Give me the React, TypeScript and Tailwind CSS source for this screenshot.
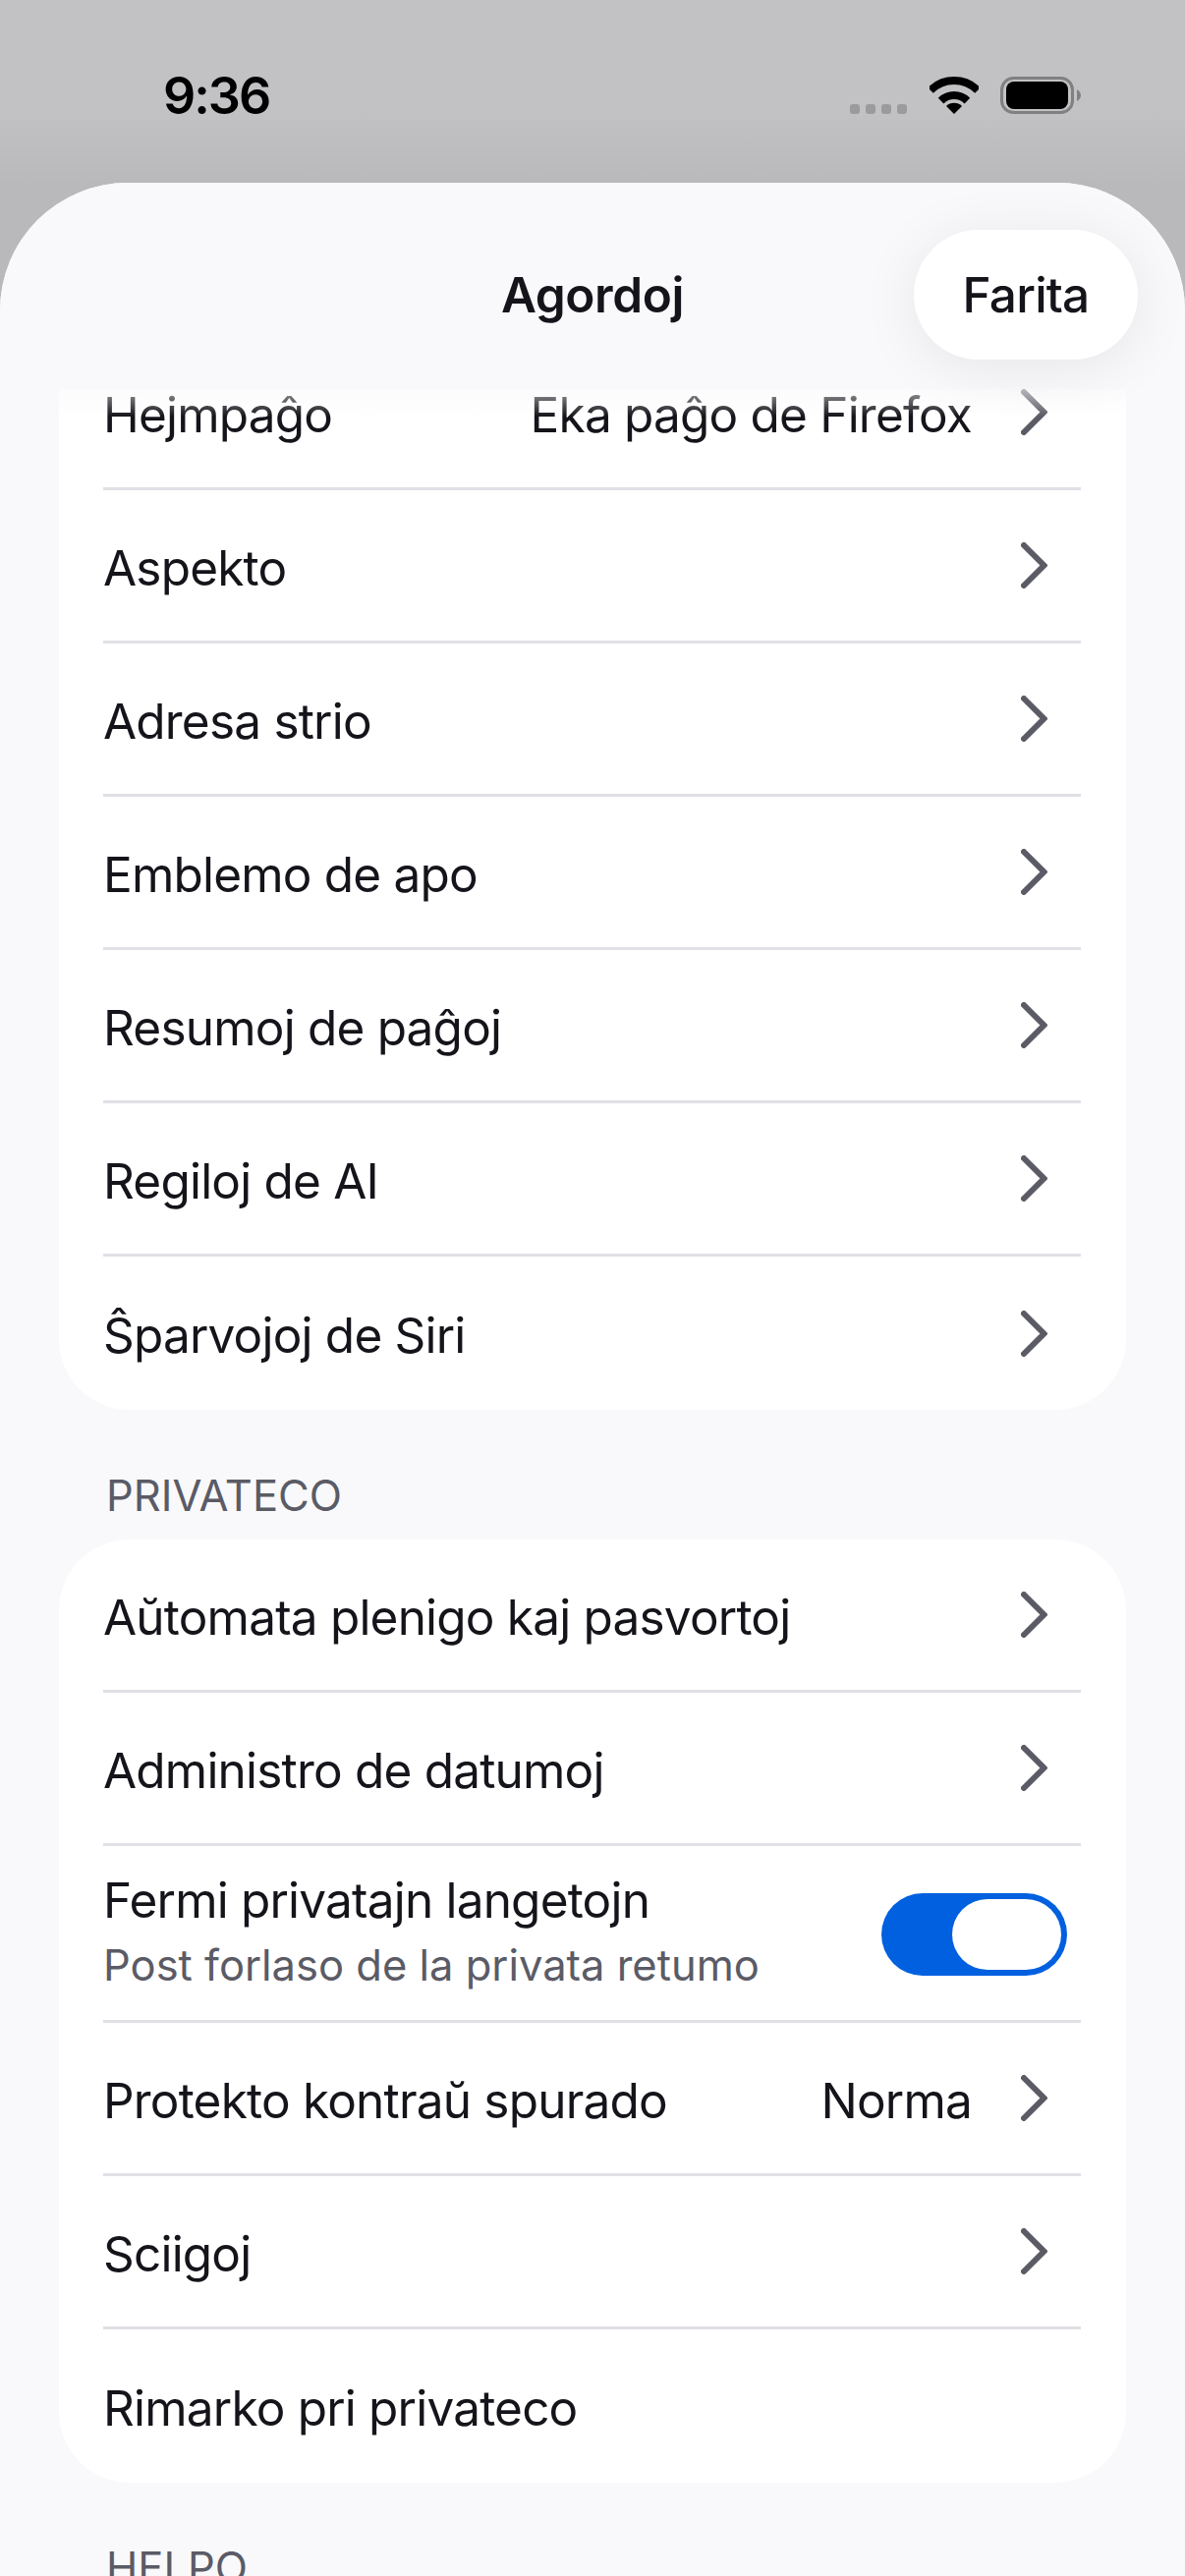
const font = { fontFamily: '"Inter", "Liberation Sans", sans-serif' };

function Chevron({ hasValue }: { hasValue?: boolean }) {
  return (
    <svg
      width="27"
      height="47"
      viewBox="0 0 27 47"
      className={`shrink-0 mr-[34px] ${hasValue ? "ml-[50px]" : "ml-0"}`}
      fill="none"
    >
      <path d="M3 3 L23.5 23.5 L3 44" stroke="#5b5b66" strokeWidth="6" strokeLinecap="round" strokeLinejoin="miter" />
    </svg>
  );
}

type RowProps = {
  label: string;
  sub?: string;
  value?: string;
  chevron?: boolean;
  last?: boolean;
  h: string;
  toggle?: boolean;
};

function Row({ label, sub, value, chevron = true, last, h, toggle }: RowProps) {
  return (
    <div className={`ml-[45px] mr-[46px] flex items-center ${h} ${last ? "" : "border-b-[3px] border-[#e0e0e6]"}`}>
      <div className={`flex-1 min-w-0 ${sub ? "pb-[5px]" : "pt-[4px]"}`}>
        <div className="text-[49.5px] leading-[60px] tracking-[-0.8px] text-[#15141a] whitespace-nowrap">{label}</div>
        {sub && <div className="mt-[10px] text-[43.5px] leading-[52px] text-[#5b5b66] whitespace-nowrap">{sub}</div>}
      </div>
      {value && (
        <div className="pt-[4px] text-[49.5px] leading-[60px] tracking-[-0.8px] text-[#15141a] whitespace-nowrap">{value}</div>
      )}
      {toggle && (
        <div className="mr-[14px] mt-[3px] w-[189px] h-[84px] rounded-full bg-[#0060df] flex items-center justify-end pr-[6px]">
          <div className="w-[111px] h-[72px] rounded-full bg-white" />
        </div>
      )}
      {chevron && <Chevron hasValue={!!value} />}
    </div>
  );
}

export default function App() {
  return (
    <div style={font} className="w-[1206px] h-[2622px] overflow-hidden flex flex-col bg-[#b9b9bb]">
      <div className="h-[186px] shrink-0 flex items-start pt-[62px] pl-[166px] pr-[106px] bg-gradient-to-b from-[#c2c2c4] from-[60%] to-[#b9b9bb]">
        <div className="pt-[1px] text-[52px] leading-[70px] tracking-[-2px] font-semibold text-black flex-1">9:36</div>
        <div className="flex items-start pt-[16px]">
          <div className="flex gap-[6px] mt-[28px] mr-[23px]">
            <div className="w-[10px] h-[10px] rounded-[3px] bg-[#9b9b9d]" />
            <div className="w-[10px] h-[10px] rounded-[3px] bg-[#9b9b9d]" />
            <div className="w-[10px] h-[10px] rounded-[3px] bg-[#9b9b9d]" />
            <div className="w-[10px] h-[10px] rounded-[3px] bg-[#9b9b9d]" />
          </div>
          <svg width="50" height="38" viewBox="0 0 50 38" fill="none" className="mr-[22px]">
            <path d="M1 14 A34 34 0 0 1 49 14" stroke="#000" strokeWidth="8" />
            <path d="M11.6 24.6 A19 19 0 0 1 38.4 24.6" stroke="#000" strokeWidth="8" />
            <path d="M25 38 L17 30 A11.3 11.3 0 0 1 33 30 Z" fill="#000" />
          </svg>
          <svg width="82" height="38" viewBox="0 0 82 38" fill="none">
            <rect x="1.5" y="1.5" width="72" height="35" rx="12" stroke="#808082" strokeWidth="3" />
            <rect x="6" y="5" width="63" height="28" rx="8" fill="#000" />
            <path d="M78 13 C80.5 14.5 82 16.5 82 19 C82 21.5 80.5 23.5 78 25 Z" fill="#808082" />
          </svg>
        </div>
      </div>

      <div className="flex-1 min-h-0 flex flex-col bg-[#f9f9fb] rounded-t-[130px] overflow-hidden">
        <div className="relative z-10 shrink-0 h-[210px] bg-[#f9f9fb] grid grid-cols-[1fr_auto_1fr] items-start pt-[48px]">
          <div />
          <div className="h-[132px] flex items-center text-[49.5px] tracking-[-0.4px] font-semibold text-[#15141a]">Agordoj</div>
          <div className="justify-self-end mr-[48px] w-[228px] h-[132px] rounded-[66px] bg-white flex items-center justify-center text-[49.5px] tracking-[-0.8px] font-medium text-[#15141a] shadow-[0_8px_60px_rgba(0,0,0,0.08)]">
            Farita
          </div>
        </div>

        <div className="relative flex-1 min-h-0 overflow-hidden">
          <div className="absolute inset-x-0 top-0 h-[28px] z-[1] bg-gradient-to-b from-[#f9f9fb]/60 to-transparent" />
          <div className="mx-[60px] -mt-[53px] bg-white rounded-b-[72px]">
            <Row label="Hejmpaĝo" value="Eka paĝo de Firefox" h="h-[156px]" />
            <Row label="Aspekto" h="h-[156px]" />
            <Row label="Adresa strio" h="h-[156px]" />
            <Row label="Emblemo de apo" h="h-[156px]" />
            <Row label="Resumoj de paĝoj" h="h-[156px]" />
            <Row label="Regiloj de AI" h="h-[156px]" />
            <Row label="Ŝparvojoj de Siri" h="h-[156px]" last />
          </div>

          <div className="ml-[108px] mt-[61px] text-[43.5px] leading-[52px] text-[#5b5b66]">PRIVATECO</div>
          <div className="mx-[60px] mt-[19px] bg-white rounded-[72px]">
            <Row label="Aŭtomata plenigo kaj pasvortoj" h="h-[156px]" />
            <Row label="Administro de datumoj" h="h-[156px]" />
            <Row label="Fermi privatajn langetojn" sub="Post forlaso de la privata retumo" chevron={false} toggle h="h-[180px]" />
            <Row label="Protekto kontraŭ spurado" value="Norma" h="h-[156px]" />
            <Row label="Sciigoj" h="h-[156px]" />
            <Row label="Rimarko pri privateco" chevron={false} last h="h-[156px]" />
          </div>

          <div className="ml-[108px] mt-[60px] text-[43.5px] leading-[52px] text-[#5b5b66]">HELPO</div>
        </div>
      </div>
    </div>
  );
}
